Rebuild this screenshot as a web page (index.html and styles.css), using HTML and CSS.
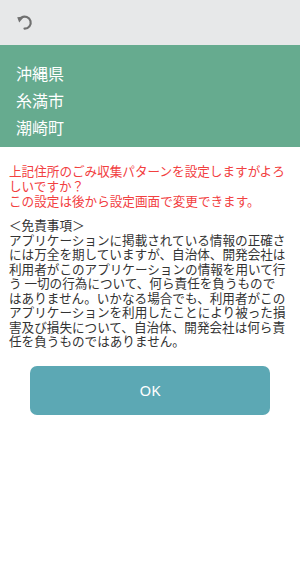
FILE: index.html
```html
<!DOCTYPE html>
<html lang="ja">
<head>
<meta charset="utf-8">
<link rel="stylesheet" href="styles.css">
</head>
<body>
<div class="topbar">
  <svg class="undo" width="20" height="20" viewBox="0 0 20 20">
    <path d="M6.4 5.6 A6 6 0 1 1 9.5 16.6" fill="none" stroke="#707070" stroke-width="2.2" stroke-linecap="round"/>
    <path d="M2.2 5.2 L9.2 4.4 L4.2 10.6 Z" fill="#707070"/>
  </svg>
</div>
<div class="address">
  <div>沖縄県</div>
  <div>糸満市</div>
  <div>潮崎町</div>
</div>
<div class="content">
  <p class="confirm">上記住所のごみ収集パターンを設定しますがよろしいですか？<br>この設定は後から設定画面で変更できます。</p>
  <p class="disclaimer">＜免責事項＞<br>アプリケーションに掲載されている情報の正確さには万全を期していますが、自治体、開発会社は利用者がこのアプリケーションの情報を用いて行う 一切の行為について、何ら責任を負うもので<br>はありません。いかなる場合でも、利用者がこのアプリケーションを利用したことにより被った損害及び損失について、自治体、開発会社は何ら責任を負うものではありません。</p>
  <button class="ok">OK</button>
</div>
</body>
</html>
```
FILE: styles.css
```css
html, body {
  margin: 0;
  padding: 0;
  background: #ffffff;
  font-family: "Noto Sans CJK JP", "Noto Sans", sans-serif;
}
.topbar {
  height: 45px;
  background: #e7e8e9;
  display: flex;
  align-items: center;
  padding-left: 15px;
}
.undo {
  display: block;
  margin-top: -2px;
}
.address {
  background: #66ab8f;
  color: #ffffff;
  font-size: 16px;
  line-height: 27px;
  padding: 15px 16px 6px;
}
.content {
  padding: 16px 9px 0;
}
.confirm {
  margin: 0;
  color: #f2403f;
  font-size: 12.6px;
  line-height: 15px;
}
.disclaimer {
  margin: 10px 0 0;
  color: #333333;
  font-size: 12.6px;
  line-height: 14.5px;
}
.ok {
  display: block;
  width: 240px;
  height: 49px;
  margin: 17px auto 0;
  border: none;
  border-radius: 7px;
  background: #5ca8b4;
  color: #ffffff;
  font-family: "Noto Sans", sans-serif;
  font-size: 15px;
}
```
